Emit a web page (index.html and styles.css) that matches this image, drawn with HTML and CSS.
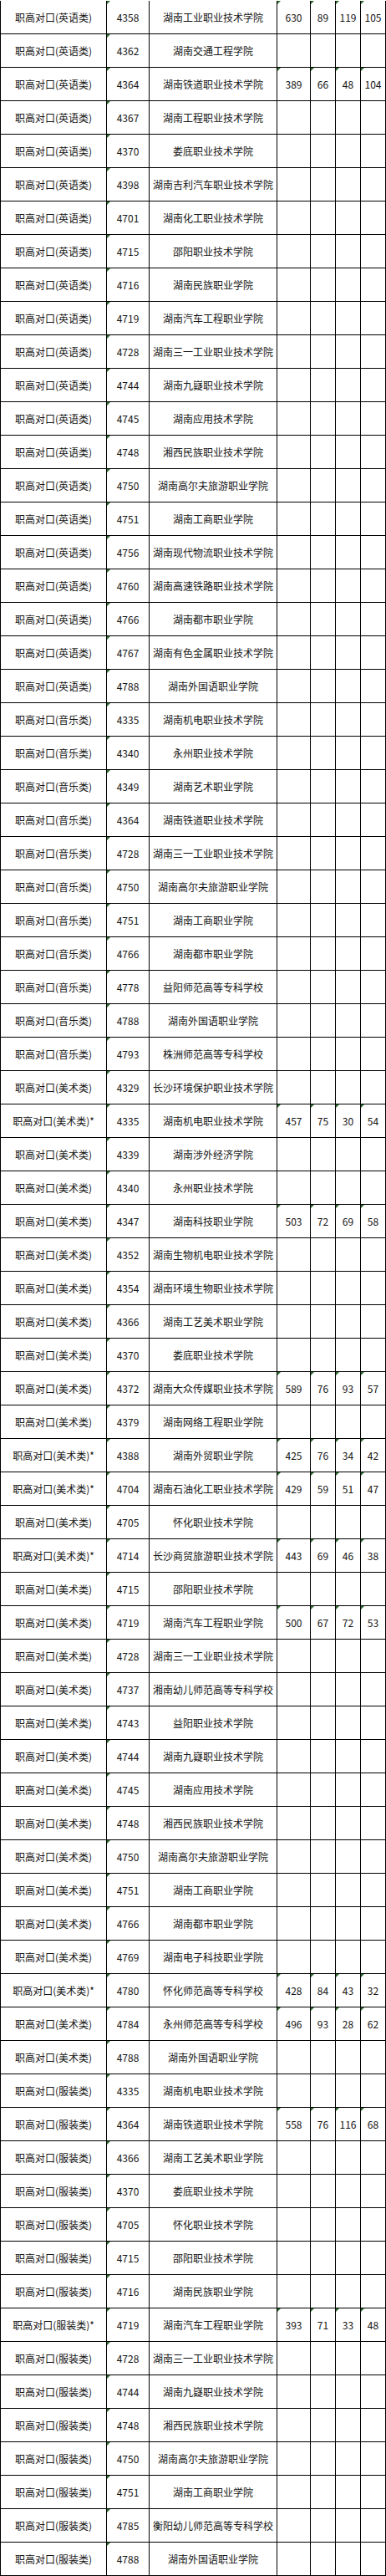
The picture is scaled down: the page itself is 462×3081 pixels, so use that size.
FILE: index.html
```html
<!DOCTYPE html>
<html lang="zh-CN">
<head>
<meta charset="utf-8">
<title>职高对口录取分数</title>
<link rel="stylesheet" href="styles.css">
</head>
<body>
<div class="sheet">
<div class="row"><div class="c">职高对口(英语类)</div><div class="c m">4358</div><div class="c">湖南工业职业技术学院</div><div class="c m">630</div><div class="c m">89</div><div class="c m">119</div><div class="c m">105</div></div>
<div class="row"><div class="c">职高对口(英语类)</div><div class="c m">4362</div><div class="c">湖南交通工程学院</div><div class="c"></div><div class="c"></div><div class="c"></div><div class="c"></div></div>
<div class="row"><div class="c">职高对口(英语类)</div><div class="c m">4364</div><div class="c">湖南铁道职业技术学院</div><div class="c m">389</div><div class="c m">66</div><div class="c m">48</div><div class="c m">104</div></div>
<div class="row"><div class="c">职高对口(英语类)</div><div class="c m">4367</div><div class="c">湖南工程职业技术学院</div><div class="c"></div><div class="c"></div><div class="c"></div><div class="c"></div></div>
<div class="row"><div class="c">职高对口(英语类)</div><div class="c m">4370</div><div class="c">娄底职业技术学院</div><div class="c"></div><div class="c"></div><div class="c"></div><div class="c"></div></div>
<div class="row"><div class="c">职高对口(英语类)</div><div class="c m">4398</div><div class="c">湖南吉利汽车职业技术学院</div><div class="c"></div><div class="c"></div><div class="c"></div><div class="c"></div></div>
<div class="row"><div class="c">职高对口(英语类)</div><div class="c m">4701</div><div class="c">湖南化工职业技术学院</div><div class="c"></div><div class="c"></div><div class="c"></div><div class="c"></div></div>
<div class="row"><div class="c">职高对口(英语类)</div><div class="c m">4715</div><div class="c">邵阳职业技术学院</div><div class="c"></div><div class="c"></div><div class="c"></div><div class="c"></div></div>
<div class="row"><div class="c">职高对口(英语类)</div><div class="c m">4716</div><div class="c">湖南民族职业学院</div><div class="c"></div><div class="c"></div><div class="c"></div><div class="c"></div></div>
<div class="row"><div class="c">职高对口(英语类)</div><div class="c m">4719</div><div class="c">湖南汽车工程职业学院</div><div class="c"></div><div class="c"></div><div class="c"></div><div class="c"></div></div>
<div class="row"><div class="c">职高对口(英语类)</div><div class="c m">4728</div><div class="c">湖南三一工业职业技术学院</div><div class="c"></div><div class="c"></div><div class="c"></div><div class="c"></div></div>
<div class="row"><div class="c">职高对口(英语类)</div><div class="c m">4744</div><div class="c">湖南九嶷职业技术学院</div><div class="c"></div><div class="c"></div><div class="c"></div><div class="c"></div></div>
<div class="row"><div class="c">职高对口(英语类)</div><div class="c m">4745</div><div class="c">湖南应用技术学院</div><div class="c"></div><div class="c"></div><div class="c"></div><div class="c"></div></div>
<div class="row"><div class="c">职高对口(英语类)</div><div class="c m">4748</div><div class="c">湘西民族职业技术学院</div><div class="c"></div><div class="c"></div><div class="c"></div><div class="c"></div></div>
<div class="row"><div class="c">职高对口(英语类)</div><div class="c m">4750</div><div class="c">湖南高尔夫旅游职业学院</div><div class="c"></div><div class="c"></div><div class="c"></div><div class="c"></div></div>
<div class="row"><div class="c">职高对口(英语类)</div><div class="c m">4751</div><div class="c">湖南工商职业学院</div><div class="c"></div><div class="c"></div><div class="c"></div><div class="c"></div></div>
<div class="row"><div class="c">职高对口(英语类)</div><div class="c m">4756</div><div class="c">湖南现代物流职业技术学院</div><div class="c"></div><div class="c"></div><div class="c"></div><div class="c"></div></div>
<div class="row"><div class="c">职高对口(英语类)</div><div class="c m">4760</div><div class="c">湖南高速铁路职业技术学院</div><div class="c"></div><div class="c"></div><div class="c"></div><div class="c"></div></div>
<div class="row"><div class="c">职高对口(英语类)</div><div class="c m">4766</div><div class="c">湖南都市职业学院</div><div class="c"></div><div class="c"></div><div class="c"></div><div class="c"></div></div>
<div class="row"><div class="c">职高对口(英语类)</div><div class="c m">4767</div><div class="c">湖南有色金属职业技术学院</div><div class="c"></div><div class="c"></div><div class="c"></div><div class="c"></div></div>
<div class="row"><div class="c">职高对口(英语类)</div><div class="c m">4788</div><div class="c">湖南外国语职业学院</div><div class="c"></div><div class="c"></div><div class="c"></div><div class="c"></div></div>
<div class="row"><div class="c">职高对口(音乐类)</div><div class="c m">4335</div><div class="c">湖南机电职业技术学院</div><div class="c"></div><div class="c"></div><div class="c"></div><div class="c"></div></div>
<div class="row"><div class="c">职高对口(音乐类)</div><div class="c m">4340</div><div class="c">永州职业技术学院</div><div class="c"></div><div class="c"></div><div class="c"></div><div class="c"></div></div>
<div class="row"><div class="c">职高对口(音乐类)</div><div class="c m">4349</div><div class="c">湖南艺术职业学院</div><div class="c"></div><div class="c"></div><div class="c"></div><div class="c"></div></div>
<div class="row"><div class="c">职高对口(音乐类)</div><div class="c m">4364</div><div class="c">湖南铁道职业技术学院</div><div class="c"></div><div class="c"></div><div class="c"></div><div class="c"></div></div>
<div class="row"><div class="c">职高对口(音乐类)</div><div class="c m">4728</div><div class="c">湖南三一工业职业技术学院</div><div class="c"></div><div class="c"></div><div class="c"></div><div class="c"></div></div>
<div class="row"><div class="c">职高对口(音乐类)</div><div class="c m">4750</div><div class="c">湖南高尔夫旅游职业学院</div><div class="c"></div><div class="c"></div><div class="c"></div><div class="c"></div></div>
<div class="row"><div class="c">职高对口(音乐类)</div><div class="c m">4751</div><div class="c">湖南工商职业学院</div><div class="c"></div><div class="c"></div><div class="c"></div><div class="c"></div></div>
<div class="row"><div class="c">职高对口(音乐类)</div><div class="c m">4766</div><div class="c">湖南都市职业学院</div><div class="c"></div><div class="c"></div><div class="c"></div><div class="c"></div></div>
<div class="row"><div class="c">职高对口(音乐类)</div><div class="c m">4778</div><div class="c">益阳师范高等专科学校</div><div class="c"></div><div class="c"></div><div class="c"></div><div class="c"></div></div>
<div class="row"><div class="c">职高对口(音乐类)</div><div class="c m">4788</div><div class="c">湖南外国语职业学院</div><div class="c"></div><div class="c"></div><div class="c"></div><div class="c"></div></div>
<div class="row"><div class="c">职高对口(音乐类)</div><div class="c m">4793</div><div class="c">株洲师范高等专科学校</div><div class="c"></div><div class="c"></div><div class="c"></div><div class="c"></div></div>
<div class="row"><div class="c">职高对口(美术类)</div><div class="c m">4329</div><div class="c">长沙环境保护职业技术学院</div><div class="c"></div><div class="c"></div><div class="c"></div><div class="c"></div></div>
<div class="row"><div class="c">职高对口(美术类)*</div><div class="c m">4335</div><div class="c">湖南机电职业技术学院</div><div class="c m">457</div><div class="c m">75</div><div class="c m">30</div><div class="c m">54</div></div>
<div class="row"><div class="c">职高对口(美术类)</div><div class="c m">4339</div><div class="c">湖南涉外经济学院</div><div class="c"></div><div class="c"></div><div class="c"></div><div class="c"></div></div>
<div class="row"><div class="c">职高对口(美术类)</div><div class="c m">4340</div><div class="c">永州职业技术学院</div><div class="c"></div><div class="c"></div><div class="c"></div><div class="c"></div></div>
<div class="row"><div class="c">职高对口(美术类)</div><div class="c m">4347</div><div class="c">湖南科技职业学院</div><div class="c m">503</div><div class="c m">72</div><div class="c m">69</div><div class="c m">58</div></div>
<div class="row"><div class="c">职高对口(美术类)</div><div class="c m">4352</div><div class="c">湖南生物机电职业技术学院</div><div class="c"></div><div class="c"></div><div class="c"></div><div class="c"></div></div>
<div class="row"><div class="c">职高对口(美术类)</div><div class="c m">4354</div><div class="c">湖南环境生物职业技术学院</div><div class="c"></div><div class="c"></div><div class="c"></div><div class="c"></div></div>
<div class="row"><div class="c">职高对口(美术类)</div><div class="c m">4366</div><div class="c">湖南工艺美术职业学院</div><div class="c"></div><div class="c"></div><div class="c"></div><div class="c"></div></div>
<div class="row"><div class="c">职高对口(美术类)</div><div class="c m">4370</div><div class="c">娄底职业技术学院</div><div class="c"></div><div class="c"></div><div class="c"></div><div class="c"></div></div>
<div class="row"><div class="c">职高对口(美术类)</div><div class="c m">4372</div><div class="c">湖南大众传媒职业技术学院</div><div class="c m">589</div><div class="c m">76</div><div class="c m">93</div><div class="c m">57</div></div>
<div class="row"><div class="c">职高对口(美术类)</div><div class="c m">4379</div><div class="c">湖南网络工程职业学院</div><div class="c"></div><div class="c"></div><div class="c"></div><div class="c"></div></div>
<div class="row"><div class="c">职高对口(美术类)*</div><div class="c m">4388</div><div class="c">湖南外贸职业学院</div><div class="c m">425</div><div class="c m">76</div><div class="c m">34</div><div class="c m">42</div></div>
<div class="row"><div class="c">职高对口(美术类)*</div><div class="c m">4704</div><div class="c">湖南石油化工职业技术学院</div><div class="c m">429</div><div class="c m">59</div><div class="c m">51</div><div class="c m">47</div></div>
<div class="row"><div class="c">职高对口(美术类)</div><div class="c m">4705</div><div class="c">怀化职业技术学院</div><div class="c"></div><div class="c"></div><div class="c"></div><div class="c"></div></div>
<div class="row"><div class="c">职高对口(美术类)*</div><div class="c m">4714</div><div class="c">长沙商贸旅游职业技术学院</div><div class="c m">443</div><div class="c m">69</div><div class="c m">46</div><div class="c m">38</div></div>
<div class="row"><div class="c">职高对口(美术类)</div><div class="c m">4715</div><div class="c">邵阳职业技术学院</div><div class="c"></div><div class="c"></div><div class="c"></div><div class="c"></div></div>
<div class="row"><div class="c">职高对口(美术类)</div><div class="c m">4719</div><div class="c">湖南汽车工程职业学院</div><div class="c m">500</div><div class="c m">67</div><div class="c m">72</div><div class="c m">53</div></div>
<div class="row"><div class="c">职高对口(美术类)</div><div class="c m">4728</div><div class="c">湖南三一工业职业技术学院</div><div class="c"></div><div class="c"></div><div class="c"></div><div class="c"></div></div>
<div class="row"><div class="c">职高对口(美术类)</div><div class="c m">4737</div><div class="c">湘南幼儿师范高等专科学校</div><div class="c"></div><div class="c"></div><div class="c"></div><div class="c"></div></div>
<div class="row"><div class="c">职高对口(美术类)</div><div class="c m">4743</div><div class="c">益阳职业技术学院</div><div class="c"></div><div class="c"></div><div class="c"></div><div class="c"></div></div>
<div class="row"><div class="c">职高对口(美术类)</div><div class="c m">4744</div><div class="c">湖南九嶷职业技术学院</div><div class="c"></div><div class="c"></div><div class="c"></div><div class="c"></div></div>
<div class="row"><div class="c">职高对口(美术类)</div><div class="c m">4745</div><div class="c">湖南应用技术学院</div><div class="c"></div><div class="c"></div><div class="c"></div><div class="c"></div></div>
<div class="row"><div class="c">职高对口(美术类)</div><div class="c m">4748</div><div class="c">湘西民族职业技术学院</div><div class="c"></div><div class="c"></div><div class="c"></div><div class="c"></div></div>
<div class="row"><div class="c">职高对口(美术类)</div><div class="c m">4750</div><div class="c">湖南高尔夫旅游职业学院</div><div class="c"></div><div class="c"></div><div class="c"></div><div class="c"></div></div>
<div class="row"><div class="c">职高对口(美术类)</div><div class="c m">4751</div><div class="c">湖南工商职业学院</div><div class="c"></div><div class="c"></div><div class="c"></div><div class="c"></div></div>
<div class="row"><div class="c">职高对口(美术类)</div><div class="c m">4766</div><div class="c">湖南都市职业学院</div><div class="c"></div><div class="c"></div><div class="c"></div><div class="c"></div></div>
<div class="row"><div class="c">职高对口(美术类)</div><div class="c m">4769</div><div class="c">湖南电子科技职业学院</div><div class="c"></div><div class="c"></div><div class="c"></div><div class="c"></div></div>
<div class="row"><div class="c">职高对口(美术类)*</div><div class="c m">4780</div><div class="c">怀化师范高等专科学校</div><div class="c m">428</div><div class="c m">84</div><div class="c m">43</div><div class="c m">32</div></div>
<div class="row"><div class="c">职高对口(美术类)</div><div class="c m">4784</div><div class="c">永州师范高等专科学校</div><div class="c m">496</div><div class="c m">93</div><div class="c m">28</div><div class="c m">62</div></div>
<div class="row"><div class="c">职高对口(美术类)</div><div class="c m">4788</div><div class="c">湖南外国语职业学院</div><div class="c"></div><div class="c"></div><div class="c"></div><div class="c"></div></div>
<div class="row"><div class="c">职高对口(服装类)</div><div class="c m">4335</div><div class="c">湖南机电职业技术学院</div><div class="c"></div><div class="c"></div><div class="c"></div><div class="c"></div></div>
<div class="row"><div class="c">职高对口(服装类)</div><div class="c m">4364</div><div class="c">湖南铁道职业技术学院</div><div class="c m">558</div><div class="c m">76</div><div class="c m">116</div><div class="c m">68</div></div>
<div class="row"><div class="c">职高对口(服装类)</div><div class="c m">4366</div><div class="c">湖南工艺美术职业学院</div><div class="c"></div><div class="c"></div><div class="c"></div><div class="c"></div></div>
<div class="row"><div class="c">职高对口(服装类)</div><div class="c m">4370</div><div class="c">娄底职业技术学院</div><div class="c"></div><div class="c"></div><div class="c"></div><div class="c"></div></div>
<div class="row"><div class="c">职高对口(服装类)</div><div class="c m">4705</div><div class="c">怀化职业技术学院</div><div class="c"></div><div class="c"></div><div class="c"></div><div class="c"></div></div>
<div class="row"><div class="c">职高对口(服装类)</div><div class="c m">4715</div><div class="c">邵阳职业技术学院</div><div class="c"></div><div class="c"></div><div class="c"></div><div class="c"></div></div>
<div class="row"><div class="c">职高对口(服装类)</div><div class="c m">4716</div><div class="c">湖南民族职业学院</div><div class="c"></div><div class="c"></div><div class="c"></div><div class="c"></div></div>
<div class="row"><div class="c">职高对口(服装类)*</div><div class="c m">4719</div><div class="c">湖南汽车工程职业学院</div><div class="c m">393</div><div class="c m">71</div><div class="c m">33</div><div class="c m">48</div></div>
<div class="row"><div class="c">职高对口(服装类)</div><div class="c m">4728</div><div class="c">湖南三一工业职业技术学院</div><div class="c"></div><div class="c"></div><div class="c"></div><div class="c"></div></div>
<div class="row"><div class="c">职高对口(服装类)</div><div class="c m">4744</div><div class="c">湖南九嶷职业技术学院</div><div class="c"></div><div class="c"></div><div class="c"></div><div class="c"></div></div>
<div class="row"><div class="c">职高对口(服装类)</div><div class="c m">4748</div><div class="c">湘西民族职业技术学院</div><div class="c"></div><div class="c"></div><div class="c"></div><div class="c"></div></div>
<div class="row"><div class="c">职高对口(服装类)</div><div class="c m">4750</div><div class="c">湖南高尔夫旅游职业学院</div><div class="c"></div><div class="c"></div><div class="c"></div><div class="c"></div></div>
<div class="row"><div class="c">职高对口(服装类)</div><div class="c m">4751</div><div class="c">湖南工商职业学院</div><div class="c"></div><div class="c"></div><div class="c"></div><div class="c"></div></div>
<div class="row"><div class="c">职高对口(服装类)</div><div class="c m">4785</div><div class="c">衡阳幼儿师范高等专科学校</div><div class="c"></div><div class="c"></div><div class="c"></div><div class="c"></div></div>
<div class="row"><div class="c">职高对口(服装类)</div><div class="c m">4788</div><div class="c">湖南外国语职业学院</div><div class="c"></div><div class="c"></div><div class="c"></div><div class="c"></div></div>
</div>
</body>
</html>
```

FILE: styles.css
```css
html, body {
  margin: 0;
  padding: 0;
  background: #ffffff;
}

body {
  font-family: "Noto Sans CJK SC", "Noto Sans", sans-serif;
  font-size: 12px;
  color: #141414;
}

.sheet {
  width: 462px;
  padding-top: 1px;
}

.row {
  display: grid;
  grid-template-columns: 127px 51px 153px 40px 30px 30px 30px;
  border-left: 1px solid #000000;
}

.c {
  position: relative;
  box-sizing: border-box;
  height: 40px;
  border-right: 1px solid #000000;
  border-bottom: 1px solid #000000;
  display: flex;
  align-items: center;
  justify-content: center;
  white-space: nowrap;
  line-height: 1;
}

.m::before {
  content: "";
  position: absolute;
  top: 0;
  left: 0;
  width: 0;
  height: 0;
  border-top: 4px solid #2d6a2f;
  border-right: 4px solid transparent;
}
```
